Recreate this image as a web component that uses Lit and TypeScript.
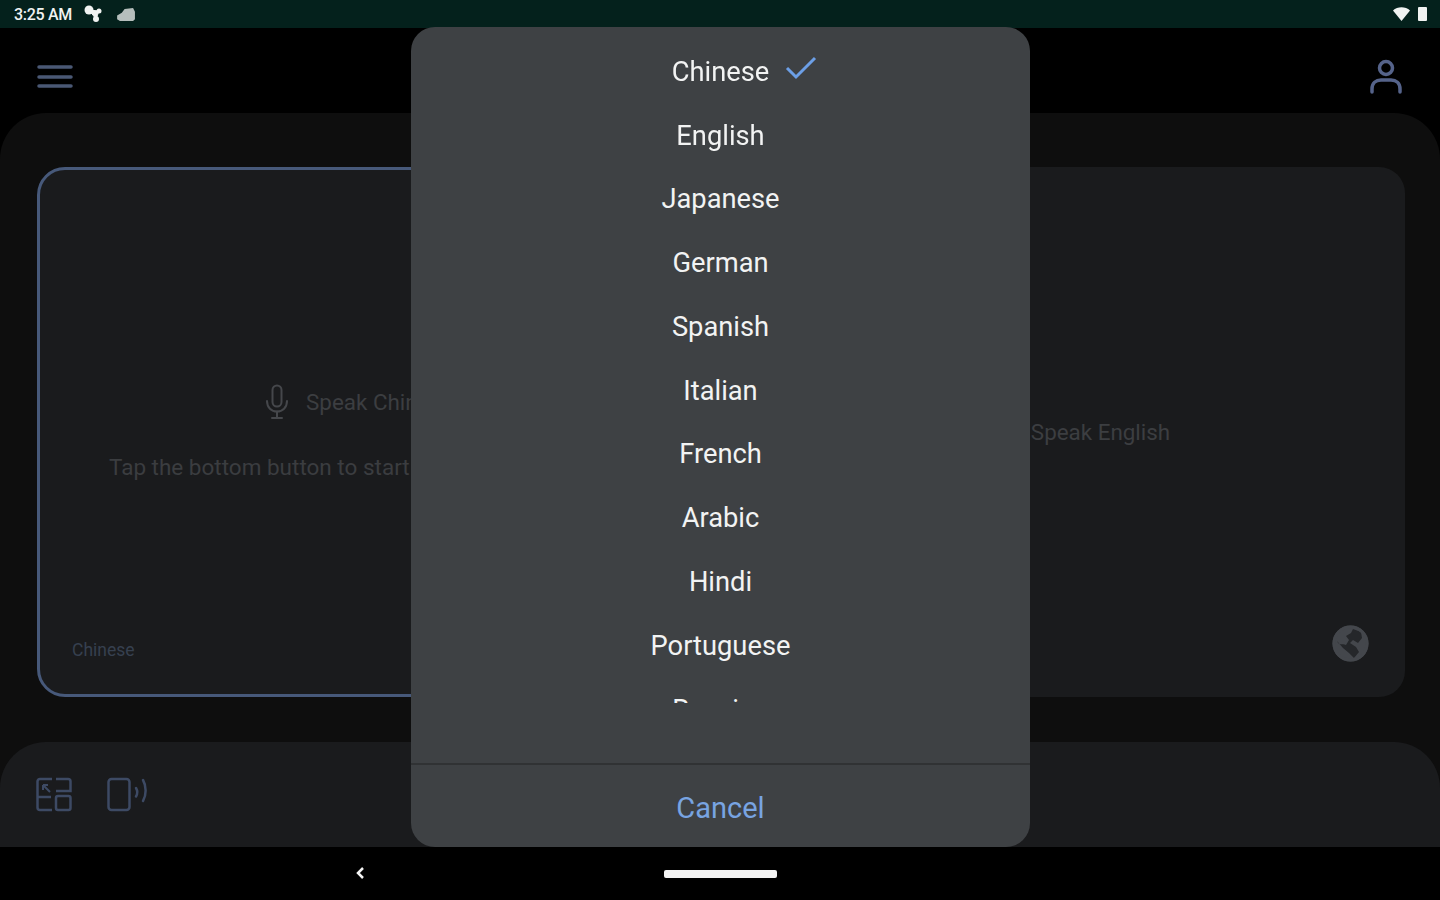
import {LitElement, html, css, svg} from 'lit';
import {customElement} from 'lit/decorators.js';

const LANGUAGES = [
  'Chinese',
  'English',
  'Japanese',
  'German',
  'Spanish',
  'Italian',
  'French',
  'Arabic',
  'Hindi',
  'Portuguese',
  'Russian',
];

const micIcon = svg`
  <svg class="mic" viewBox="0 0 24 36" fill="none" stroke="currentColor" stroke-width="2" stroke-linecap="round">
    <rect x="7.500" y="1.500" width="9" height="21" rx="4.500" />
    <path d="M2 17c0 6.500 4.500 10.500 10 10.500S22 23.500 22 17" />
    <path d="M12 27.500V34M7 34h10" />
  </svg>
`;

@customElement('app-root')
export class AppRoot extends LitElement {
  static styles = css`
    :host {
      display: block;
      width: 1440px;
      height: 900px;
      overflow: hidden;
      font-family: Roboto, 'Liberation Sans', sans-serif;
      background: #000;
    }

    .screen {
      position: relative;
      display: flex;
      flex-direction: column;
      width: 1440px;
      height: 900px;
      filter: blur(0.65px);
    }

    .statusBar {
      display: flex;
      align-items: center;
      justify-content: space-between;
      flex: none;
      height: 28px;
      padding: 0 13px 0 14px;
      background: #04211c;
      color: #f1f3f2;
      box-sizing: border-box;
    }

    .statusLeft,
    .statusRight {
      display: flex;
      align-items: center;
    }

    .statusLeft {
      gap: 12px;
    }

    .statusRight {
      gap: 8px;
    }

    .time {
      font-size: 16px;
      font-weight: 500;
      letter-spacing: -0.3px;
    }

    .header {
      display: flex;
      align-items: center;
      justify-content: space-between;
      flex: none;
      height: 85px;
      padding: 13px 37px 0 37px;
      box-sizing: border-box;
      background: #000;
    }

    .menuIcon {
      width: 36px;
      height: 26px;
      color: #4a5874;
    }

    .personIcon {
      width: 34px;
      height: 38px;
      color: #55638a;
    }

    .main {
      display: flex;
      flex-direction: column;
      flex: 1;
      min-height: 0;
      padding-top: 54px;
      border-radius: 46px 46px 0 0;
      background: #0e0e0e;
    }

    .cards {
      display: grid;
      grid-template-columns: 644px 650px;
      justify-content: space-between;
      flex: 1;
      min-height: 0;
      margin: 0 35px 45px 37px;
    }

    .card {
      position: relative;
      display: flex;
      flex-direction: column;
      align-items: center;
      justify-content: center;
      gap: 35px;
      box-sizing: border-box;
      border-radius: 26px;
      background: #1a1b1d;
    }

    .card.active {
      border: 3px solid #47597a;
      border-radius: 28px;
    }

    .speak {
      display: flex;
      align-items: center;
      gap: 17px;
      height: 36px;
      font-size: 22.400px;
      color: #3c3e41;
    }

    .mic {
      width: 24px;
      height: 36px;
      color: #45474b;
    }

    .hint {
      font-size: 22.500px;
      line-height: 25px;
      white-space: nowrap;
      color: #3b3d40;
    }

    .cardLang {
      position: absolute;
      left: 32px;
      bottom: 34px;
      font-size: 17.500px;
      color: #36404f;
    }

    .globe {
      position: absolute;
      right: 36px;
      bottom: 35px;
      width: 37px;
      height: 37px;
    }

    .toolbar {
      display: flex;
      align-items: flex-start;
      gap: 35px;
      flex: none;
      height: 105px;
      padding: 35px 0 0 36px;
      box-sizing: border-box;
      border-radius: 46px 46px 0 0;
      background: #1a1b1d;
      color: #3d4a64;
    }

    .layoutIcon {
      width: 36px;
      height: 35px;
    }

    .speakerIcon {
      width: 42px;
      height: 35px;
    }

    .navBar {
      display: flex;
      align-items: center;
      justify-content: center;
      position: relative;
      flex: none;
      height: 53px;
      background: #000;
    }

    .back {
      position: absolute;
      left: 355px;
      top: 19px;
      width: 10px;
      height: 14px;
      color: #f4f4f4;
    }

    .pill {
      width: 113px;
      height: 8px;
      border-radius: 2px;
      background: #f4f4f4;
    }

    .dialog {
      position: absolute;
      left: 411px;
      top: 27px;
      display: flex;
      flex-direction: column;
      width: 619px;
      height: 820px;
      border-radius: 24px;
      background: #3e4144;
      overflow: hidden;
    }

    .list {
      flex: none;
      height: 663px;
      margin-top: 13px;
      overflow: hidden;
    }

    .row {
      display: flex;
      align-items: center;
      justify-content: center;
      height: 63.780px;
      font-size: 27.300px;
      color: #f2f3f3;
    }

    .label {
      position: relative;
    }

    .check {
      position: absolute;
      left: calc(100% + 16px);
      top: 0;
      width: 32px;
      height: 24px;
      color: #6c9fe6;
    }

    .cancel {
      display: flex;
      align-items: center;
      justify-content: center;
      margin-top: 60px;
      padding-top: 3px;
      flex: 1;
      border-top: 2px solid #303234;
      font-size: 29px;
      color: #78a4e2;
    }
  `;

  render() {
    return html`
      <div class="screen">
        <div class="statusBar">
          <div class="statusLeft">
            <span class="time">3:25 AM</span>
            <svg width="20" height="18" viewBox="0 0 20 18" fill="currentColor">
              <circle cx="5" cy="5" r="4.500" />
              <circle cx="15" cy="6" r="2.500" />
              <circle cx="12" cy="14" r="3" />
              <path d="M5 5l10 1-3 8z" stroke="currentColor" />
            </svg>
            <svg width="21" height="15" viewBox="0 0 22 16" fill="currentColor" opacity="0.75">
              <path d="M1 9l5-3 3-4 9-1 2 4v8l-2 2H4l-3-2z" />
            </svg>
          </div>
          <div class="statusRight">
            <svg width="17" height="14" viewBox="0 0 17 14" fill="currentColor">
              <path d="M0 3.500C4.500-.8 12.500-.8 17 3.500L8.500 14z" />
            </svg>
            <svg width="9" height="14" viewBox="0 0 9 14" fill="currentColor">
              <rect width="9" height="14" rx="1" />
            </svg>
          </div>
        </div>

        <div class="header">
          <svg class="menuIcon" viewBox="0 0 36 26" fill="none" stroke="currentColor" stroke-width="3.500" stroke-linecap="round">
            <path d="M2 3h32M2 13h32M2 22h32" />
          </svg>
          <svg class="personIcon" viewBox="0 0 34 38" fill="none" stroke="currentColor" stroke-width="3.500" stroke-linecap="round">
            <circle cx="17" cy="10" r="6.500" />
            <path d="M3 34v-3c0-6 4-9 9-9h10c5 0 9 3 9 9v3" />
          </svg>
        </div>

        <div class="main">
          <div class="cards">
            <div class="card active">
              <div class="speak">${micIcon}<span>Speak Chinese</span></div>
              <div class="hint">Tap the bottom button to start realtime translation</div>
              <span class="cardLang">Chinese</span>
            </div>
            <div class="card">
              <div class="speak">${micIcon}<span>Speak English</span></div>
              <svg class="globe" viewBox="0 0 37 37">
                <circle cx="18.500" cy="18.500" r="18" fill="#44474c" />
                <path d="M21 4l8 3 1 6-4 5-5-3-3 3 6 4 3 5-5 6-5-5-6-5-6-7c2 5 5 2 9 4l3-5-3-4 5-3z" fill="#25272a" />
                <circle cx="18.500" cy="18.500" r="16.500" fill="none" stroke="#44474c" stroke-width="3" />
              </svg>
            </div>
          </div>
          <div class="toolbar">
            <svg class="layoutIcon" viewBox="0 0 36 35" fill="none" stroke="currentColor" stroke-width="2.500">
              <path d="M16 2H4a2.500 2.500 0 0 0-2.500 2.500v26A2.500 2.500 0 0 0 4 33h12M1.500 20H15" />
              <path d="M20 2h12a2.500 2.500 0 0 1 2.500 2.500V14H20" />
              <rect x="20" y="19" width="14.500" height="14" rx="2" />
              <path d="M7 8l7 7M7 8h5M7 8v5" stroke-width="2" />
            </svg>
            <svg class="speakerIcon" viewBox="0 0 42 35" fill="none" stroke="currentColor" stroke-width="2.500" stroke-linecap="round">
              <rect x="1.500" y="2" width="21" height="31" rx="3" />
              <path d="M29 11c1.500 2.500 1.500 6 0 8.500" />
              <path d="M36 3c3.500 6 3.500 15 0 21" />
            </svg>
          </div>
        </div>

        <div class="navBar">
          <svg class="back" viewBox="0 0 10 14" fill="none" stroke="currentColor" stroke-width="2.500">
            <path d="M8 2L3 7l5 5" />
          </svg>
          <div class="pill"></div>
        </div>

        <div class="dialog">
          <div class="list">
            ${LANGUAGES.map(
              (lang, i) => html`
                <div class="row">
                  <span class="label">
                    ${lang}
                    ${i === 0
                      ? html`<svg class="check" viewBox="0 0 32 24" fill="none" stroke="currentColor" stroke-width="3">
                          <path d="M2 12l9 9L30 2" />
                        </svg>`
                      : ''}
                  </span>
                </div>
              `
            )}
          </div>
          <div class="cancel">Cancel</div>
        </div>
      </div>
    `;
  }
}
